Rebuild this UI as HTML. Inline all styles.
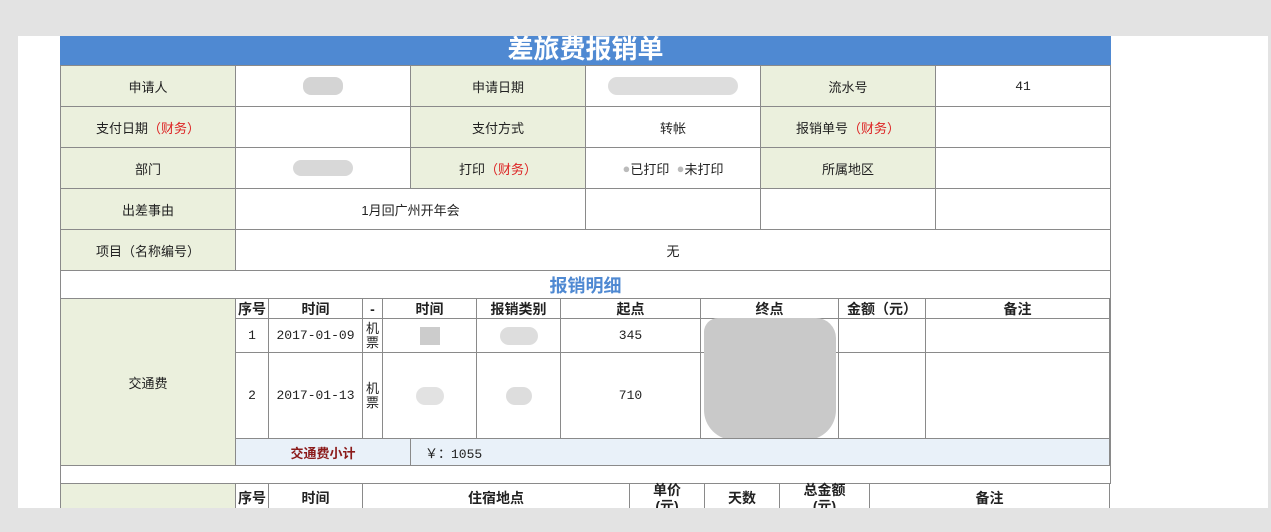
<!DOCTYPE html><html><head><meta charset="utf-8"><style>
body{margin:0;width:1271px;height:532px;background:#e3e3e3;position:relative;overflow:hidden;font-family:"Liberation Sans","Noto Sans CJK SC",sans-serif;font-size:13px;color:#222}
.a{position:absolute;box-sizing:border-box}
.c{position:absolute;box-sizing:border-box;border:1px solid #8a8a8a;display:flex;align-items:center;justify-content:center;background:#fff}
.l{background:#ebf0dd}
.r{color:#d22}
.b{position:absolute;background:#d4d4d4;border-radius:8px}
.m{font-family:"Liberation Mono","Noto Sans CJK SC",monospace;font-size:13px}
.h{font-weight:bold;font-size:14px}
</style></head><body>
<div class="a" style="left:18px;top:36px;width:1250px;height:472px;background:#fff"></div>
<div class="a" style="left:60px;top:36px;width:1051px;height:30px;background:#4f89d2;color:#fff;font-size:26px;font-weight:bold;text-align:center;line-height:26px">差旅费报销单</div>
<!-- rows -->
<div class="c l" style="left:60px;top:65px;width:176px;height:42px">申请人</div>
<div class="c" style="left:235px;top:65px;width:176px;height:42px"><div class="b" style="position:static;width:40px;height:18px"></div></div>
<div class="c l" style="left:410px;top:65px;width:176px;height:42px">申请日期</div>
<div class="c" style="left:585px;top:65px;width:176px;height:42px"><div style="width:130px;height:18px;background:#ddd;border-radius:9px"></div></div>
<div class="c l" style="left:760px;top:65px;width:176px;height:42px">流水号</div>
<div class="c m" style="left:935px;top:65px;width:176px;height:42px">41</div>

<div class="c l" style="left:60px;top:106px;width:176px;height:42px">支付日期<span class="r">（财务）</span></div>
<div class="c" style="left:235px;top:106px;width:176px;height:42px"></div>
<div class="c l" style="left:410px;top:106px;width:176px;height:42px">支付方式</div>
<div class="c" style="left:585px;top:106px;width:176px;height:42px">转帐</div>
<div class="c l" style="left:760px;top:106px;width:176px;height:42px">报销单号<span class="r">（财务）</span></div>
<div class="c" style="left:935px;top:106px;width:176px;height:42px"></div>

<div class="c l" style="left:60px;top:147px;width:176px;height:42px">部门</div>
<div class="c" style="left:235px;top:147px;width:176px;height:42px"><div style="width:60px;height:16px;background:#d8d8d8;border-radius:8px"></div></div>
<div class="c l" style="left:410px;top:147px;width:176px;height:42px">打印<span class="r">（财务）</span></div>
<div class="c" style="left:585px;top:147px;width:176px;height:42px"><span style="color:#bbb">●</span>已打印 &nbsp;<span style="color:#bbb">●</span>未打印</div>
<div class="c l" style="left:760px;top:147px;width:176px;height:42px">所属地区</div>
<div class="c" style="left:935px;top:147px;width:176px;height:42px"></div>

<div class="c l" style="left:60px;top:188px;width:176px;height:42px">出差事由</div>
<div class="c" style="left:235px;top:188px;width:351px;height:42px">1月回广州开年会</div>
<div class="c" style="left:585px;top:188px;width:176px;height:42px"></div>
<div class="c" style="left:760px;top:188px;width:176px;height:42px"></div>
<div class="c" style="left:935px;top:188px;width:176px;height:42px"></div>

<div class="c l" style="left:60px;top:229px;width:176px;height:42px">项目（名称编号）</div>
<div class="c" style="left:235px;top:229px;width:876px;height:42px">无</div>

<div class="c" style="left:60px;top:270px;width:1051px;height:29px;color:#4f89d2;font-size:18px;font-weight:bold">报销明细</div>
<div class="c l" style="left:60px;top:298px;width:176px;height:168px">交通费</div>
<div class="a" style="left:235px;top:298px;width:876px;height:168px;background:#fff;border:1px solid #8a8a8a"></div>
<!-- header -->
<div class="c h" style="left:235px;top:298px;width:34px;height:21px">序号</div>
<div class="c h" style="left:268px;top:298px;width:95px;height:21px">时间</div>
<div class="c h" style="left:362px;top:298px;width:21px;height:21px">-</div>
<div class="c h" style="left:382px;top:298px;width:95px;height:21px">时间</div>
<div class="c h" style="left:476px;top:298px;width:85px;height:21px">报销类别</div>
<div class="c h" style="left:560px;top:298px;width:141px;height:21px">起点</div>
<div class="c h" style="left:700px;top:298px;width:139px;height:21px">终点</div>
<div class="c h" style="left:838px;top:298px;width:88px;height:21px">金额（元）</div>
<div class="c h" style="left:925px;top:298px;width:185px;height:21px">备注</div>
<!-- row1 -->
<div class="c m" style="left:235px;top:318px;width:34px;height:35px">1</div>
<div class="c m" style="left:268px;top:318px;width:95px;height:35px">2017-01-09</div>
<div class="c" style="left:362px;top:318px;width:21px;height:35px;line-height:14px;text-align:center">机<br>票</div>
<div class="c" style="left:382px;top:318px;width:95px;height:35px"><div style="width:20px;height:18px;background:#ccc"></div></div>
<div class="c" style="left:476px;top:318px;width:85px;height:35px"><div style="width:38px;height:18px;background:#ddd;border-radius:9px"></div></div>
<div class="c m" style="left:560px;top:318px;width:141px;height:35px">345</div>
<div class="c" style="left:700px;top:318px;width:139px;height:35px"></div>
<div class="c" style="left:838px;top:318px;width:88px;height:35px"></div>
<div class="c" style="left:925px;top:318px;width:185px;height:35px"></div>
<!-- row2 -->
<div class="c m" style="left:235px;top:352px;width:34px;height:87px">2</div>
<div class="c m" style="left:268px;top:352px;width:95px;height:87px">2017-01-13</div>
<div class="c" style="left:362px;top:352px;width:21px;height:87px;line-height:14px;text-align:center">机<br>票</div>
<div class="c" style="left:382px;top:352px;width:95px;height:87px"><div style="width:28px;height:18px;background:#e2e2e2;border-radius:9px"></div></div>
<div class="c" style="left:476px;top:352px;width:85px;height:87px"><div style="width:26px;height:18px;background:#ddd;border-radius:9px"></div></div>
<div class="c m" style="left:560px;top:352px;width:141px;height:87px">710</div>
<div class="c" style="left:700px;top:352px;width:139px;height:87px"></div>
<div class="c" style="left:838px;top:352px;width:88px;height:87px"></div>
<div class="c" style="left:925px;top:352px;width:185px;height:87px"></div>
<div class="a" style="left:704px;top:318px;width:132px;height:122px;background:#c9c9c9;border-radius:14px 20px 30px 30px"></div>
<!-- subtotal -->
<div class="c" style="left:235px;top:438px;width:176px;height:28px;background:#e9f1f9;color:#8b1a1a;font-weight:bold">交通费小计</div>
<div class="c m" style="left:410px;top:438px;width:700px;height:28px;background:#e9f1f9;justify-content:flex-start;padding-left:14px">￥：1055</div>
<div class="c" style="left:60px;top:465px;width:1051px;height:19px"></div>
<!-- next section -->
<div class="c l" style="left:60px;top:483px;width:176px;height:30px"></div>
<div class="c h" style="left:235px;top:483px;width:34px;height:30px">序号</div>
<div class="c h" style="left:268px;top:483px;width:95px;height:30px">时间</div>
<div class="c h" style="left:362px;top:483px;width:268px;height:30px">住宿地点</div>
<div class="c h" style="left:629px;top:483px;width:76px;height:30px;line-height:16px;text-align:center">单价<br>(元)</div>
<div class="c h" style="left:704px;top:483px;width:76px;height:30px">天数</div>
<div class="c h" style="left:779px;top:483px;width:91px;height:30px;line-height:16px;text-align:center">总金额<br>(元)</div>
<div class="c h" style="left:869px;top:483px;width:241px;height:30px">备注</div>
<div class="a" style="left:0;top:508px;width:1271px;height:24px;background:#e3e3e3"></div>
</body></html>
